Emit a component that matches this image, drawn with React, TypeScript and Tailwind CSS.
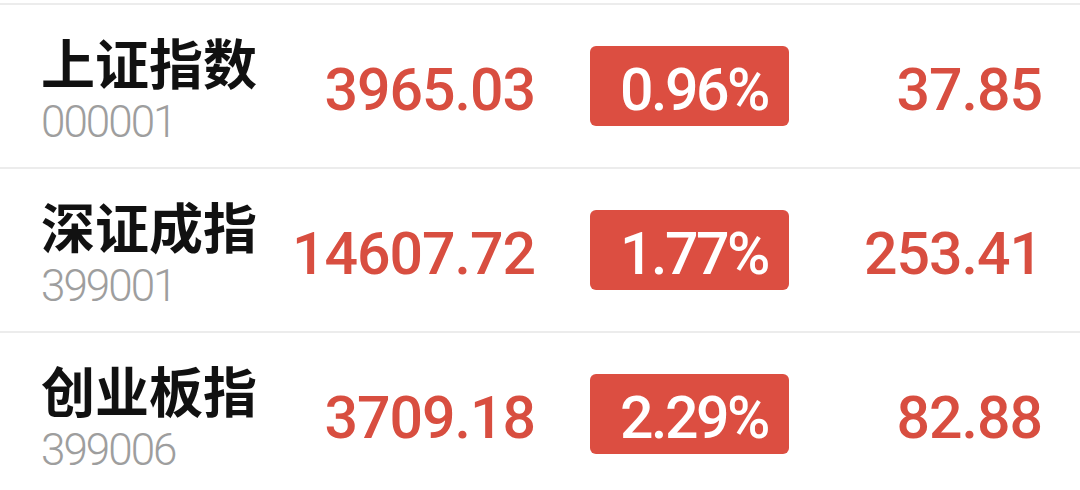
import React from 'react';

interface IndexRow {
  name: string;
  code: string;
  price: string;
  pct: string;
  change: string;
}

const ROWS: IndexRow[] = [
  { name: '上证指数', code: '000001', price: '3965.03', pct: '0.96%', change: '37.85' },
  { name: '深证成指', code: '399001', price: '14607.72', pct: '1.77%', change: '253.41' },
  { name: '创业板指', code: '399006', price: '3709.18', pct: '2.29%', change: '82.88' },
];

const num = "font-['Roboto','Liberation_Sans',sans-serif]";

const Row: React.FC<{ row: IndexRow }> = ({ row }) => (
  <div className="flex h-[164px] items-start border-t-2 border-[#ececec] pl-[41px]">
    <div className="w-[250px] pt-[30px]">
      <p className="font-['Noto_Sans_CJK_SC',sans-serif] text-[54px] font-bold leading-none text-[#111111]">
        {row.name}
      </p>
      <p className={`${num} mt-[11px] text-[44px] font-light leading-none tracking-[-2px] text-[#9e9e9e]`}>
        {row.code}
      </p>
    </div>
    <div className={`${num} w-[244px] pt-[55px] text-right text-[59px] font-medium leading-none tracking-[-1px] text-[#d84e40]`}>
      {row.price}
    </div>
    <div className="ml-[55px] mt-[41px] flex h-[80px] w-[199px] justify-end rounded-[6px] bg-[#dc4e41] pr-[21px] pt-[14px]">
      <span className={`${num} text-[59px] font-medium leading-none tracking-[-2.5px] text-white`}>
        {row.pct}
      </span>
    </div>
    <div className={`${num} w-[253px] pt-[55px] text-right text-[59px] font-medium leading-none tracking-[-1px] text-[#d84e40]`}>
      {row.change}
    </div>
  </div>
);

export default function App() {
  return (
    <div className="h-[490px] w-[1080px] overflow-hidden bg-white pt-[3px]">
      {ROWS.map((r) => (
        <Row key={r.code} row={r} />
      ))}
    </div>
  );
}
